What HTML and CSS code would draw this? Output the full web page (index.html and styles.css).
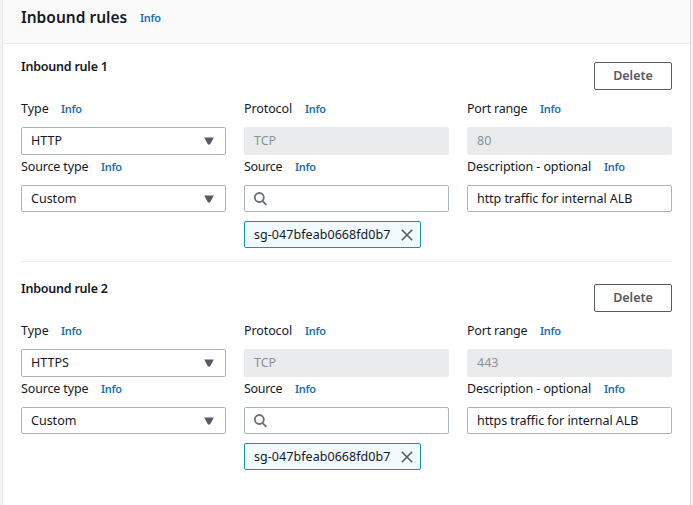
FILE: index.html
```html
<!DOCTYPE html>
<html lang="en">
<head>
<meta charset="utf-8">
<title>Inbound rules</title>
<link rel="stylesheet" href="styles.css">
</head>
<body>
<main class="panel">
  <header class="panel-header"><h1>Inbound rules</h1><a class="info">Info</a></header>
  <section class="rule">
    <div class="rule-head"><h2>Inbound rule 1</h2><button class="delete">Delete</button></div>
    <div class="grid">
      <div class="field"><div class="label"><span class="type">Type</span><a class="info">Info</a></div><div class="input select"><span class="http">HTTP</span><svg width="10" height="8" viewBox="0 0 10 8"><path d="M.2.5h9.6L6 7.5H4z"/></svg></div></div>
      <div class="field"><div class="label"><span class="protocol">Protocol</span><a class="info">Info</a></div><div class="input disabled"><span>TCP</span></div></div>
      <div class="field"><div class="label"><span class="port">Port range</span><a class="info">Info</a></div><div class="input disabled"><span>80</span></div></div>
    </div>
    <div class="grid second">
      <div class="field"><div class="label"><span class="source-type">Source type</span><a class="info">Info</a></div><div class="input select"><span>Custom</span><svg width="10" height="8" viewBox="0 0 10 8"><path d="M.2.5h9.6L6 7.5H4z"/></svg></div></div>
      <div class="field"><div class="label"><span class="source">Source</span><a class="info">Info</a></div><div class="input"><svg class="search" width="14" height="14" viewBox="0 0 14 14"><circle cx="5.3" cy="5.5" r="4.5"/><path d="M8.4 8.8l4 4"/></svg></div><div class="token"><span>sg-047bfeab0668fd0b7</span><svg width="12" height="12" viewBox="0 0 12 12"><path d="M.8.8l10.4 10.4M11.2.8L.8 11.2"/></svg></div></div>
      <div class="field"><div class="label"><span class="description">Description - optional</span><a class="info">Info</a></div><div class="input"><span class="text">http traffic for internal ALB</span></div></div>
    </div>
  </section>
  <section class="rule">
    <div class="rule-head"><h2>Inbound rule 2</h2><button class="delete">Delete</button></div>
    <div class="grid">
      <div class="field"><div class="label"><span class="type">Type</span><a class="info">Info</a></div><div class="input select"><span class="http">HTTPS</span><svg width="10" height="8" viewBox="0 0 10 8"><path d="M.2.5h9.6L6 7.5H4z"/></svg></div></div>
      <div class="field"><div class="label"><span class="protocol">Protocol</span><a class="info">Info</a></div><div class="input disabled"><span>TCP</span></div></div>
      <div class="field"><div class="label"><span class="port">Port range</span><a class="info">Info</a></div><div class="input disabled"><span>443</span></div></div>
    </div>
    <div class="grid second">
      <div class="field"><div class="label"><span class="source-type">Source type</span><a class="info">Info</a></div><div class="input select"><span>Custom</span><svg width="10" height="8" viewBox="0 0 10 8"><path d="M.2.5h9.6L6 7.5H4z"/></svg></div></div>
      <div class="field"><div class="label"><span class="source">Source</span><a class="info">Info</a></div><div class="input"><svg class="search" width="14" height="14" viewBox="0 0 14 14"><circle cx="5.3" cy="5.5" r="4.5"/><path d="M8.4 8.8l4 4"/></svg></div><div class="token"><span>sg-047bfeab0668fd0b7</span><svg width="12" height="12" viewBox="0 0 12 12"><path d="M.8.8l10.4 10.4M11.2.8L.8 11.2"/></svg></div></div>
      <div class="field"><div class="label"><span class="description">Description - optional</span><a class="info">Info</a></div><div class="input"><span class="text">https traffic for internal ALB</span></div></div>
    </div>
  </section>
</main>
</body>
</html>
```
FILE: styles.css
```css
* { box-sizing: border-box; }
body { margin: 0; height: 505px; overflow: hidden; background: #f5f5f5; color: #16191f; font: 12.5px/18px "Noto Sans", sans-serif; }
.panel { width: 689px; height: 505px; margin-left: 2px; background: #fff; border: solid #d5dbdb; border-width: 0 1px; border-left-color: #e6e8e8; }
.panel-header { height: 44px; padding: 6px 18px 0; display: flex; align-items: flex-start; background: #fafafa; border-bottom: 1px solid #eaeded; }
h1 { margin: 0; width: 106px; font-size: 15.5px; line-height: 22px; font-weight: 600; white-space: nowrap; }
.panel-header .info { margin-top: 3px; }
.info { margin-left: 13px; color: #216fae; font-size: 11px; line-height: 18px; font-weight: 600; letter-spacing: -.3px; }
.rule { height: 222px; padding: 18px 0 0; margin: 0 18px; }
.rule-head { height: 28px; display: flex; justify-content: space-between; align-items: flex-start; }
h2 { margin: -4px 0 0; font-size: 12.5px; line-height: 18px; font-weight: 600; letter-spacing: -.22px; }
.delete { width: 78px; height: 28px; padding: 0; background: #fff; border: 1px solid #545b64; border-radius: 2px; color: #545b64; font: 600 12.5px/18px "Noto Sans", sans-serif; }
.grid { display: grid; grid-template-columns: repeat(3, 205px); gap: 18px; }
.label { height: 37px; padding-top: 10px; display: flex; white-space: nowrap; }
.second .label { height: 30px; padding-top: 3px; }
.input { height: 28px; padding: 0 9px; display: flex; align-items: center; border: 1px solid #aab7b8; border-radius: 2px; background: #fff; white-space: nowrap; }
.second .input { height: 27px; }
.select { justify-content: space-between; padding-right: 11px; }
.select svg { fill: #545b64; }
.disabled { background: #eaebed; border-color: #eaebed; color: #879596; }
.search { fill: none; stroke: #687078; stroke-width: 1.8; }
.token { width: 177px; height: 27px; margin-top: 9px; padding: 0 7px 0 9px; display: flex; align-items: center; justify-content: space-between; border: 1px solid #1295a5; border-radius: 2px; background: #f1faff; }
.token span { letter-spacing: .05px; }
.token svg { fill: none; stroke: #545b64; stroke-width: 1.6; }
.type { width: 27px; }
.protocol { width: 48px; letter-spacing: -.1px; }
.port { width: 60px; letter-spacing: -.2px; }
.source-type { width: 67px; letter-spacing: -.15px; }
.source { width: 38px; letter-spacing: -.3px; }
.description { width: 124px; letter-spacing: -.1px; }
.text { letter-spacing: -.06px; }
.rule:not(:last-child) { height: 218px; margin-bottom: 4px; border-bottom: 1px solid #eaeded; }
```
